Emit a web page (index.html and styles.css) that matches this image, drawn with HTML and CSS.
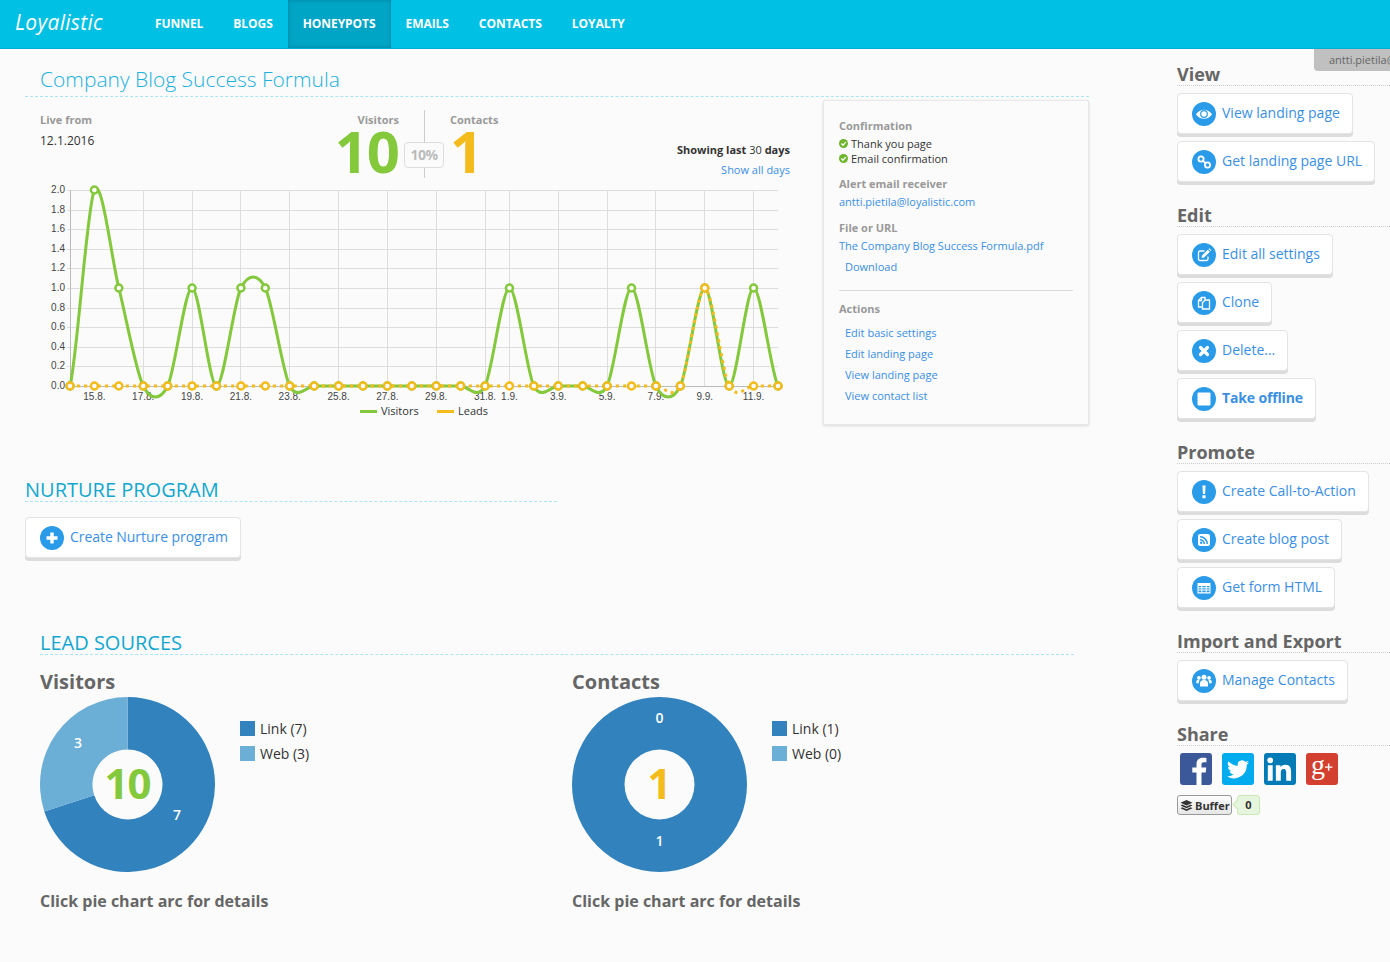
FILE: index.html
```html
<!DOCTYPE html>
<html lang="en">
<head>
<meta charset="utf-8">
<title>Loyalistic</title>
<link rel="stylesheet" href="styles.css">
</head>
<body>
<header class="topbar">
  <a class="logo">Loyalistic</a>
  <nav class="nav">
    <a class="nav-item">Funnel</a>
    <a class="nav-item">Blogs</a>
    <a class="nav-item active">Honeypots</a>
    <a class="nav-item">Emails</a>
    <a class="nav-item">Contacts</a>
    <a class="nav-item">Loyalty</a>
  </nav>
</header>
<div class="user-tab">antti.pietila@loyalistic.com</div>

<div class="page">
  <main class="main">
    <h1 class="page-title">Company Blog Success Formula</h1>
    <section class="overview">
      <div class="chart-col">
        <div class="stats">
          <div class="stat-live">
            <div class="label">Live from</div>
            <div class="live-date">12.1.2016</div>
          </div>
          <div class="stat stat-visitors">
            <div class="label">Visitors</div>
            <div class="big green">10</div>
          </div>
          <div class="ratio">
            <span class="ratio-line top"></span>
            <span class="ratio-box">10%</span>
            <span class="ratio-line bottom"></span>
          </div>
          <div class="stat stat-contacts">
            <div class="label">Contacts</div>
            <div class="big yellow">1</div>
          </div>
          <div class="range">
            <div class="range-text"><b>Showing last</b> 30 <b>days</b></div>
            <a class="link range-link">Show all days</a>
          </div>
        </div>
        <svg id="chart" class="chart" viewBox="25 180 798 245" width="798" height="245"></svg>
      </div>
      <aside class="card">
        <div class="label">Confirmation</div>
        <div class="check-row first"><svg class="check" viewBox="0 0 10 10"><circle cx="5" cy="5" r="5"/><path d="M2.6 5.1 4.4 6.9 7.5 3.5"/></svg>Thank you page</div>
        <div class="check-row"><svg class="check" viewBox="0 0 10 10"><circle cx="5" cy="5" r="5"/><path d="M2.6 5.1 4.4 6.9 7.5 3.5"/></svg>Email confirmation</div>
        <div class="label block-label">Alert email receiver</div>
        <a class="link card-line">antti.pietila@loyalistic.com</a>
        <div class="label block-label">File or URL</div>
        <a class="link card-line">The Company Blog Success Formula.pdf</a>
        <a class="link card-action download">Download</a>
        <hr class="card-rule">
        <div class="label">Actions</div>
        <div class="card-actions">
          <a class="link card-action">Edit basic settings</a>
          <a class="link card-action">Edit landing page</a>
          <a class="link card-action">View landing page</a>
          <a class="link card-action">View contact list</a>
        </div>
      </aside>
    </section>

    <section class="nurture">
      <h2 class="section-title">NURTURE PROGRAM</h2>
      <a class="btn nurture-btn">
        <svg class="ico" viewBox="0 0 24 24"><circle cx="12" cy="12" r="12"/><path class="w" d="M10.300 6.500h3.400v3.800h3.800v3.400h-3.800v3.800h-3.400v-3.800H6.500v-3.400h3.800z"/></svg>
        <span>Create Nurture program</span>
      </a>
    </section>

    <section class="sources">
      <h2 class="section-title">LEAD SOURCES</h2>
      <div class="pies">
        <div class="pie-col">
          <h3 class="pie-title">Visitors</h3>
          <div class="pie-row">
            <svg class="pie" viewBox="0 0 175 175" width="175" height="175">
              <path class="arc-a" d="M87.5 0A87.5 87.5 0 1 1 4.28 114.54L54.2 98.3A35 35 0 1 0 87.5 52.5Z"/>
              <path class="arc-b" d="M4.28 114.54A87.5 87.5 0 0 1 87.5 0V52.5A35 35 0 0 0 54.2 98.3Z"/>
              <text class="arc-label" x="38" y="51">3</text>
              <text class="arc-label" x="137" y="123">7</text>
              <text class="pie-total green" x="87.5" y="102">10</text>
            </svg>
            <ul class="legend">
              <li><span class="swatch dark"></span>Link (7)</li>
              <li><span class="swatch light"></span>Web (3)</li>
            </ul>
          </div>
          <p class="pie-note">Click pie chart arc for details</p>
        </div>
        <div class="pie-col">
          <h3 class="pie-title">Contacts</h3>
          <div class="pie-row">
            <svg class="pie" viewBox="0 0 175 175" width="175" height="175">
              <path class="arc-a" fill-rule="evenodd" d="M87.5 0a87.5 87.5 0 1 1 0 175a87.5 87.5 0 1 1 0-175ZM87.5 52.5a35 35 0 1 0 0 70a35 35 0 1 0 0-70Z"/>
              <text class="arc-label" x="87.5" y="26">0</text>
              <text class="arc-label" x="87.5" y="149">1</text>
              <text class="pie-total yellow" x="87" y="102">1</text>
            </svg>
            <ul class="legend">
              <li><span class="swatch dark"></span>Link (1)</li>
              <li><span class="swatch light"></span>Web (0)</li>
            </ul>
          </div>
          <p class="pie-note">Click pie chart arc for details</p>
        </div>
      </div>
    </section>
  </main>

  <aside class="side">
    <h3 class="side-title">View</h3>
    <a class="btn"><svg class="ico" viewBox="0 0 24 24"><circle cx="12" cy="12" r="12"/><path class="w" d="M4 12.300C6 9.300 8.800 7.800 12 7.800s6 1.500 8 4.500c-2 3-4.800 4.500-8 4.500s-6-1.500-8-4.500Z"/><circle class="eye-ring" cx="12" cy="12" r="3.300"/></svg><span>View landing page</span></a>
    <a class="btn"><svg class="ico" viewBox="0 0 24 24"><circle cx="12" cy="12" r="12"/><g class="ring"><circle cx="9" cy="9" r="2.600"/><circle cx="15.500" cy="15" r="2.600"/><path d="M11 11l2.500 2"/></g></svg><span>Get landing page URL</span></a>

    <h3 class="side-title">Edit</h3>
    <a class="btn"><svg class="ico" viewBox="0 0 24 24"><circle cx="12" cy="12" r="12"/><path class="line" d="M16 13.500V16a1.500 1.500 0 0 1-1.500 1.500H8A1.500 1.500 0 0 1 6.500 16V9.500A1.500 1.500 0 0 1 8 8h4.500"/><path class="w" d="M10 12.500 15.800 6.700l2.100 2.100-5.800 5.800-2.500.5zM16.500 6l.8-.7 2 2-.7.800z"/></svg><span>Edit all settings</span></a>
    <a class="btn"><svg class="ico" viewBox="0 0 24 24"><circle cx="12" cy="12" r="12"/><path class="line" d="M10 16H6.500V9.500L9.500 6.500H13V9"/><path class="line" d="M9.500 6.700V9.500H6.700"/><path class="line" d="M10.500 18V11.500L13.500 9H17.500V18Z"/></svg><span>Clone</span></a>
    <a class="btn"><svg class="ico" viewBox="0 0 24 24"><circle cx="12" cy="12" r="12"/><path class="cross" d="M8.500 8.500l7 7M15.500 8.500l-7 7"/></svg><span>Delete...</span></a>
    <a class="btn strong"><svg class="ico" viewBox="0 0 24 24"><circle cx="12" cy="12" r="12"/><rect class="w" x="5.500" y="5.500" width="13" height="13" rx="1"/></svg><span>Take offline</span></a>

    <h3 class="side-title">Promote</h3>
    <a class="btn"><svg class="ico" viewBox="0 0 24 24"><circle cx="12" cy="12" r="12"/><path class="w" d="M10.400 5.500h3.200l-.5 8.500h-2.200zM10.400 15.200h3.200v3h-3.200z"/></svg><span>Create Call-to-Action</span></a>
    <a class="btn"><svg class="ico" viewBox="0 0 24 24"><circle cx="12" cy="12" r="12"/><path class="w" fill-rule="evenodd" d="M8 6h8a2 2 0 0 1 2 2v8a2 2 0 0 1-2 2H8a2 2 0 0 1-2-2V8a2 2 0 0 1 2-2ZM8 8v1.500a6.500 6.500 0 0 1 6.500 6.500H16A8 8 0 0 0 8 8ZM8 11v1.500a3.500 3.500 0 0 1 3.500 3.500H13a5 5 0 0 0-5-5ZM9.200 13.600a1.200 1.200 0 1 0 0 2.400a1.200 1.200 0 1 0 0-2.400Z"/></svg><span>Create blog post</span></a>
    <a class="btn"><svg class="ico" viewBox="0 0 24 24"><circle cx="12" cy="12" r="12"/><path class="w" fill-rule="evenodd" d="M5.500 7h13v10.500h-13ZM6.500 10v1.300h2.800V10ZM10.300 10v1.300h3.400V10ZM14.700 10v1.300h2.800V10ZM6.500 12.200v1.300h2.800v-1.300ZM10.300 12.200v1.300h3.400v-1.300ZM14.700 12.200v1.300h2.800v-1.300ZM6.500 14.400v1.900h2.800v-1.900ZM10.300 14.400v1.900h3.400v-1.900ZM14.700 14.400v1.900h2.800v-1.900Z"/></svg><span>Get form HTML</span></a>

    <h3 class="side-title">Import and Export</h3>
    <a class="btn"><svg class="ico" viewBox="0 0 24 24"><circle cx="12" cy="12" r="12"/><g class="w"><circle cx="12" cy="8.200" r="2.500"/><circle cx="6.900" cy="8.800" r="1.900"/><circle cx="17.100" cy="8.800" r="1.900"/><path d="M8 17.500v-3.300c0-2 1.500-3.300 4-3.300s4 1.300 4 3.300v3.300zM4.300 14.300v-1.500c0-1.200.8-2 2.200-2h1.200c-.5.800-.8 1.800-.8 3v.5zM19.700 14.300v-1.500c0-1.200-.8-2-2.200-2h-1.200c.5.800.8 1.800.8 3v.5z"/></g></svg><span>Manage Contacts</span></a>

    <h3 class="side-title">Share</h3>
    <div class="social">
      <svg class="soc fb" viewBox="0 0 32 32"><rect width="32" height="32" rx="3"/><path class="w" d="M21.500 32V19.500h4.200l.6-4.900h-4.800v-3c0-1.400.4-2.400 2.400-2.400h2.500V5c-.4-.1-2-.2-3.700-.2-3.700 0-6.200 2.200-6.200 6.400v3.400H12.300v4.900h4.200V32z"/></svg>
      <svg class="soc tw" viewBox="0 0 32 32"><rect width="32" height="32" rx="3"/><path class="w" d="M27 9.500c-.8.400-1.700.6-2.600.7.900-.6 1.600-1.400 2-2.500-.9.500-1.800.9-2.900 1.100a4.500 4.500 0 0 0-7.700 4.100c-3.700-.2-7-2-9.300-4.700a4.500 4.500 0 0 0 1.400 6c-.7 0-1.400-.2-2-.6 0 2.200 1.500 4 3.600 4.500-.7.200-1.400.2-2 .1.600 1.800 2.200 3.100 4.200 3.100a9 9 0 0 1-6.700 1.900 12.800 12.800 0 0 0 19.700-11.400c.9-.6 1.700-1.400 2.300-2.400z"/></svg>
      <svg class="soc li" viewBox="0 0 32 32"><rect width="32" height="32" rx="3"/><path class="w" d="M3.800 12.200h4.900v15.500H3.800zM6.200 4.500a2.800 2.800 0 1 1 0 5.700 2.800 2.800 0 0 1 0-5.700zM11.800 12.200h4.700v2.100c.7-1.300 2.300-2.500 4.700-2.500 5 0 5.900 3.200 5.900 7.400v8.500h-4.900V20.200c0-1.800 0-4.100-2.500-4.100s-2.900 2-2.900 4v7.600h-4.900z"/></svg>
      <svg class="soc gp" viewBox="0 0 32 32"><rect width="32" height="32" rx="3"/><text class="gp-g" x="5" y="21">g</text><path class="w" d="M21.900 10.400h1.500v3h3v1.400h-3v3h-1.500v-3h-3v-1.400h3z"/></svg>
    </div>
    <div class="buffer">
      <a class="buffer-btn"><svg class="buffer-ico" viewBox="0 0 14 12"><path d="M7 0l6.500 3L7 6 .5 3zM2.500 5l4.500 2 4.500-2 2 1L7 9 .5 6zM2.500 8l4.500 2 4.500-2 2 1L7 12 .5 9z"/></svg>Buffer</a>
      <span class="buffer-count">0</span>
    </div>
  </aside>
</div>
<script src="chart.js"></script>
</body>
</html>
```

FILE: styles.css
```css
* { box-sizing: border-box; }
html, body { margin: 0; padding: 0; }
body {
  background: #fbfbfb;
  font-family: "Open Sans", "Noto Sans", sans-serif;
  color: #333;
  width: 1390px;
  height: 962px;
  overflow: hidden;
  position: relative;
}
a { text-decoration: none; cursor: pointer; }

/* top bar */
.topbar {
  display: flex;
  height: 49px;
  background: #00c0e4;
  border-bottom: 1px solid #00acd0;
}
.logo {
  width: 140px;
  padding-left: 15px;
  font-weight: 400;
  font-style: italic;
  font-size: 21px;
  line-height: 44px;
  letter-spacing: .3px;
  color: #fff;
}
.nav { display: flex; }
.nav-item {
  padding: 0 15px;
  font-weight: 700;
  font-size: 12px;
  line-height: 47px;
  letter-spacing: -.06px;
  text-transform: uppercase;
  color: #fff;
}
.nav-item.active {
  background: #00a5c6;
  box-shadow: inset 0 0 4px rgba(0, 70, 90, .35);
}
.user-tab {
  position: absolute;
  top: 49px;
  left: 1314px;
  width: 76px;
  height: 22px;
  padding-left: 15px;
  background: #c0c0c0;
  border-bottom-left-radius: 4px;
  color: #666;
  font-size: 11px;
  line-height: 21px;
  white-space: nowrap;
  overflow: hidden;
}

/* layout */
.page { display: flex; }
.main { flex: 0 0 1177px; padding-left: 25px; }
.side {
  flex: 1;
  min-width: 0;
  padding-top: 14px;
  display: flex;
  flex-direction: column;
  align-items: flex-start;
}

/* title */
.page-title {
  width: 1064px;
  margin: 0;
  padding: 15px 0 0 15px;
  height: 48px;
  border-bottom: 1px dashed #abe4f3;
  font-weight: 300;
  font-size: 21px;
  line-height: 30px;
  color: #1cb0dc;
}
.overview { display: flex; width: 1064px; height: 328px; }
.chart-col { flex: 0 0 798px; }

/* stats */
.stats {
  display: grid;
  grid-template-columns: 289px 70px 50px 60px 1fr;
  height: 83px;
  padding: 13px 33px 0 15px;
}
.label {
  font-weight: 700;
  font-size: 11px;
  line-height: 16px;
  color: #999;
}
.stat-live { padding-top: 2px; }
.live-date { margin-top: 4px; font-size: 12px; line-height: 18px; color: #333; }
.stat { padding-top: 2px; white-space: nowrap; }
.stat-visitors { text-align: right; }
.stat-contacts { padding-left: 1px; }
.big {
  margin-top: 1px;
  font-weight: 700;
  font-size: 58px;
  line-height: 44px;
  letter-spacing: -1px;
}
.green { color: #84c83c; fill: #84c83c; }
.yellow { color: #f4bb1c; fill: #f4bb1c; }
.ratio { display: flex; flex-direction: column; align-items: center; }
.ratio-line { width: 1px; background: #ccc; }
.ratio-line.top { height: 32px; }
.ratio-line.bottom { height: 10px; }
.ratio-box {
  width: 40px;
  height: 26px;
  border: 1px solid #ddd;
  border-radius: 4px;
  background: #fbfbfb;
  text-align: center;
  font-weight: 700;
  font-size: 14px;
  line-height: 24px;
  letter-spacing: -.5px;
  color: #bbb;
}
.range { padding-top: 31px; text-align: right; }
.range-text { font-size: 11px; line-height: 18px; color: #333; white-space: nowrap; }
.range-link { display: block; margin-top: 2px; font-size: 11px; line-height: 18px; }
.link { color: #3a8fe4; }

/* chart */
.chart { display: block; }
.chart .grid { stroke: #ddd; stroke-width: 1; }
.chart .axis { stroke: #bbb; stroke-width: 1; }
.chart text { font-family: "Liberation Sans", Arial, sans-serif; font-size: 10px; fill: #444; }
.chart .tick-x { text-anchor: middle; }
.chart .tick-y { text-anchor: end; }
.chart .legend-text { font-family: "Open Sans", sans-serif; font-size: 11px; fill: #333; }
.chart .series { fill: none; stroke-width: 3; }
.chart .visitors { stroke: #84c83c; }
.chart .leads { stroke: #f4bb1c; stroke-dasharray: 3 4; }
.chart .dot { fill: #fff; stroke-width: 2.500; }
.chart .dot.visitors { stroke: #84c83c; }
.chart .dot.leads { stroke: #f4bb1c; stroke-dasharray: none; }
.chart .key { stroke-width: 3; }

/* card */
.card {
  flex: 0 0 266px;
  height: 325px;
  margin-top: 3px;
  padding: 17px 15px 0;
  background: #fbfbfb;
  border: 1px solid #e8e8e8;
  border-radius: 2px;
  box-shadow: 0 1px 3px rgba(0, 0, 0, .14);
  font-size: 11px;
}
.check-row {
  display: flex;
  align-items: center;
  gap: 3px;
  height: 15px;
  font-size: 11px;
  color: #333;
}
.check-row.first { margin-top: 2px; }
.check { width: 9px; height: 9px; flex: none; }
.check circle { fill: #6db52d; }
.check path { fill: none; stroke: #fff; stroke-width: 1.500; }
.block-label { margin-top: 10px; }
.card-line { display: block; margin-top: 2px; line-height: 16px; }
.card-action { display: block; margin-left: 6px; line-height: 21px; }
.download { margin-top: 2px; }
.card-rule { height: 1px; margin: 13px 0 10px; border: 0; background: #d9d9d9; }
.card-actions { margin-top: 5px; }

/* buttons */
.btn {
  display: inline-flex;
  align-items: center;
  gap: 6px;
  height: 41px;
  margin-bottom: 7px;
  padding: 0 12px 0 14px;
  background: #fff;
  border: 1px solid #e4e4e4;
  border-radius: 4px;
  box-shadow: 0 3px 0 #dcdcdc;
  color: #3a8fe4;
  font-size: 14px;
  line-height: 20px;
  white-space: nowrap;
}
.btn span { position: relative; top: -1px; }
.btn.strong { font-weight: 700; letter-spacing: -.15px; }
.ico { flex: none; width: 24px; height: 24px; }
.ico > circle { fill: #2a9be8; }
.ico .w, .soc .w { fill: #fff; }
.ico .eye-ring { fill: #fff; stroke: #2a9be8; stroke-width: 1.200; }
.ico .line { fill: none; stroke: #fff; stroke-width: 1.300; }
.ico .ring { fill: none; stroke: #fff; stroke-width: 1.800; }
.ico .cross { fill: none; stroke: #fff; stroke-width: 3.200; stroke-linecap: round; }

/* sections */
.nurture { width: 532px; margin-top: 54px; }
.section-title {
  margin: 0;
  height: 23px;
  border-bottom: 1px dashed #abe4f3;
  font-weight: 400;
  font-size: 20px;
  line-height: 22px;
  color: #13a7cf;
}
.nurture-btn { margin: 15px 0 0; letter-spacing: -.05px; }
.sources { width: 1034px; margin: 74px 0 0 15px; }
.pies { display: flex; margin-top: 13px; }
.pie-col { flex: 0 0 532px; }
.pie-title {
  margin: 0 0 1px;
  font-weight: 700;
  font-size: 20px;
  line-height: 28px;
  color: #666;
}
.pie-row { display: flex; }
.pie { display: block; flex: none; }
.arc-a { fill: #3182bd; }
.arc-b { fill: #6baed6; }
.arc-label { fill: #fff; font-size: 14px; font-weight: 600; text-anchor: middle; }
.pie-total { font-weight: 700; font-size: 42px; text-anchor: middle; letter-spacing: -1px; }
.legend { margin: 19px 0 0 25px; padding: 0; list-style: none; }
.legend li {
  display: flex;
  align-items: center;
  gap: 5px;
  height: 25px;
  font-size: 14px;
  color: #333;
}
.swatch { width: 15px; height: 15px; }
.swatch.dark { background: #3182bd; }
.swatch.light { background: #6baed6; }
.pie-note {
  margin: 18px 0 0;
  font-weight: 700;
  font-size: 16px;
  line-height: 22px;
  color: #666;
}

/* sidebar */
.side-title {
  align-self: stretch;
  margin: 0 0 7px;
  height: 23px;
  border-bottom: 1px dotted #ccc;
  font-weight: 700;
  font-size: 18px;
  line-height: 22px;
  color: #666;
}
.btn + .side-title { margin-top: 15px; }
.social { display: flex; gap: 10px; padding-left: 3px; }
.soc { width: 32px; height: 32px; display: block; }
.fb rect { fill: #3b5998; }
.tw rect { fill: #00aced; }
.li rect { fill: #007bb6; }
.gp rect { fill: #d3402f; }
.gp-g { font-family: "Liberation Serif", serif; font-size: 28px; fill: #fff; }
.buffer { display: flex; align-items: center; margin-top: 10px; }
.buffer-btn {
  display: flex;
  align-items: center;
  gap: 2px;
  width: 55px;
  height: 20px;
  padding-left: 2px;
  border: 1px solid #999;
  border-radius: 3px;
  background: linear-gradient(#fdfdfd, #e6e6e6);
  color: #333;
  font-weight: 700;
  font-size: 11px;
}
.buffer-ico { width: 13px; height: 11px; fill: #333; }
.buffer-count {
  position: relative;
  width: 23px;
  height: 20px;
  margin-left: 5px;
  background: #e6f5dd;
  border: 1px solid #cbe9b6;
  border-radius: 3px;
  text-align: center;
  font-weight: 700;
  font-size: 11px;
  line-height: 18px;
  color: #333;
}
.buffer-count::before {
  content: "";
  position: absolute;
  left: -4px;
  top: 5px;
  width: 6px;
  height: 6px;
  background: #e6f5dd;
  border-left: 1px solid #cbe9b6;
  border-bottom: 1px solid #cbe9b6;
  transform: rotate(45deg);
}
```

FILE: chart.js
```js
(function () {
  var NS = "http://www.w3.org/2000/svg";
  var svg = document.getElementById("chart");
  var X0 = 70, STEP = 708 / 29, Y0 = 386, UNIT = 98;
  var visitors = [0,2,1,0,0,1,0,1,1,0,0,0,0,0,0,0,0,0,1,0,0,0,0,1,0,0,1,0,1,0];
  var leads = visitors.map(function (_, i) { return i === 26 ? 1 : 0; });
  var labels = {1:"15.8.",3:"17.8.",5:"19.8.",7:"21.8.",9:"23.8.",11:"25.8.",13:"27.8.",15:"29.8.",17:"31.8.",18:"1.9.",20:"3.9.",22:"5.9.",24:"7.9.",26:"9.9.",28:"11.9."};

  function px(i) { return X0 + i * STEP; }
  function py(v) { return Y0 - v * UNIT; }
  function add(tag, attrs, text) {
    var el = document.createElementNS(NS, tag);
    Object.keys(attrs).forEach(function (k) { el.setAttribute(k, attrs[k]); });
    if (text) el.textContent = text;
    svg.appendChild(el);
    return el;
  }
  function spline(data) {
    var k = 0.15, d = "M" + px(0) + " " + py(data[0]);
    for (var i = 0; i < data.length - 1; i++) {
      var a = data[Math.max(i - 1, 0)], b = data[i], c = data[i + 1], e = data[Math.min(i + 2, data.length - 1)];
      d += "C" + (px(i) + 2 * k * STEP) + " " + (py(b) - k * (c - a) * UNIT) + " " +
        (px(i + 1) - 2 * k * STEP) + " " + (py(c) + k * (e - b) * UNIT) + " " +
        px(i + 1) + " " + py(c);
    }
    return d;
  }

  for (var t = 0; t <= 10; t++) {
    var y = Math.round(Y0 - t * 19.6) + .5;
    add("line", {x1: 67, x2: 778, y1: y, y2: y, "class": t ? "grid" : "axis"});
    add("text", {x: 65, y: y + 2, "class": "tick-y"}, (t / 5).toFixed(1));
  }
  add("line", {x1: 70.5, x2: 70.5, y1: 190, y2: 386, "class": "axis"});
  Object.keys(labels).forEach(function (i) {
    var x = Math.floor(px(+i)) + .5;
    if (+i > 1) add("line", {x1: x, x2: x, y1: 190, y2: 386, "class": "grid"});
    add("text", {x: px(+i), y: 400, "class": "tick-x"}, labels[i]);
  });

  add("path", {d: spline(visitors), "class": "series visitors"});
  add("path", {d: spline(leads), "class": "series leads"});
  visitors.forEach(function (v, i) {
    add("circle", {cx: px(i), cy: py(v), r: 3.5, "class": "dot visitors"});
  });
  leads.forEach(function (v, i) {
    add("circle", {cx: px(i), cy: py(v), r: 3.5, "class": "dot leads"});
  });

  add("line", {x1: 360, x2: 377, y1: 411.5, y2: 411.5, "class": "key visitors"});
  add("text", {x: 381, y: 415, "class": "legend-text"}, "Visitors");
  add("line", {x1: 437, x2: 454, y1: 411.5, y2: 411.5, "class": "key leads-key"}).style.stroke = "#f4bb1c";
  add("text", {x: 458, y: 415, "class": "legend-text"}, "Leads");
})();
```
